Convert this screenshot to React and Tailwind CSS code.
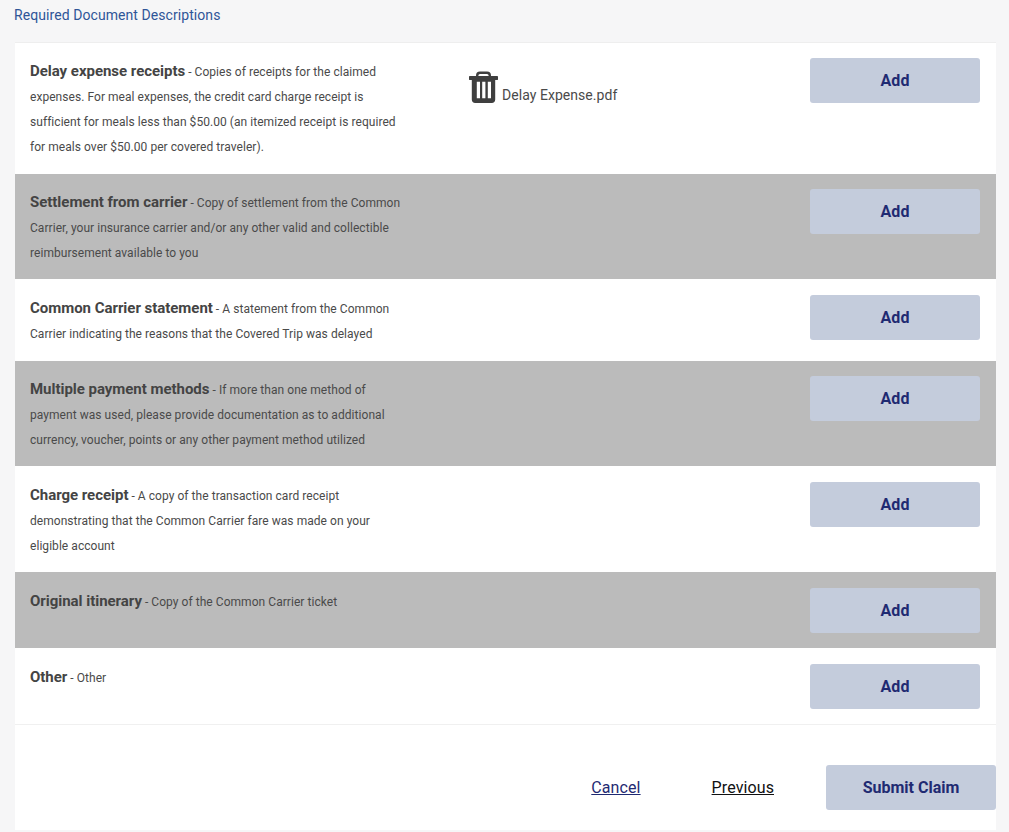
const rows = [
  { t: "Delay expense receipts", d: "Copies of receipts for the claimed expenses. For meal expenses, the credit card charge receipt is sufficient for meals less than $50.00 (an itemized receipt is required for meals over $50.00 per covered traveler).", file: true, c: "h-[131px] pt-[15px]" },
  { t: "Settlement from carrier", d: "Copy of settlement from the Common Carrier, your insurance carrier and/or any other valid and collectible reimbursement available to you", c: "h-[105px] pt-[15px] bg-[#bbbbbb]" },
  { t: "Common Carrier statement", d: "A statement from the Common Carrier indicating the reasons that the Covered Trip was delayed", c: "h-[82px] pt-[16px]" },
  { t: "Multiple payment methods", d: "If more than one method of payment was used, please provide documentation as to additional currency, voucher, points or any other payment method utilized", c: "h-[105px] pt-[15px] bg-[#bbbbbb]" },
  { t: "Charge receipt", d: "A copy of the transaction card receipt demonstrating that the Common Carrier fare was made on your eligible account", c: "h-[106px] pt-[16px]" },
  { t: "Original itinerary", d: "Copy of the Common Carrier ticket", c: "h-[76px] pt-[16px] bg-[#bbbbbb]" },
  { t: "Other", d: "Other", c: "h-[77px] pt-[16px] border-b border-[#f0f0f0]" },
];

function Trash() {
  return (
    <svg width="29" height="32" viewBox="0 0 29 32" className="shrink-0">
      <path fill="none" stroke="#3f3f3f" strokeWidth="2.4" d="M8.200 6V4.500C8.200 2.700 9.500 1.700 11 1.700h7c1.500 0 2.800 1 2.800 2.800V6" />
      <path fill="#3f3f3f" d="M1 5h27c.6 0 1 .4 1 1v2.500c0 .3-.2.5-.5.5h-2.300v19.500c0 2-1.400 3.500-3.300 3.500H6.100c-1.900 0-3.300-1.500-3.300-3.500V9H.5C.2 9 0 8.800 0 8.500V6c0-.6.400-1 1-1z" />
      <path fill="#fff" d="M7.800 10.800H11v16.500H7.800zM13.200 10.800h3.200v16.500h-3.200zM18.800 10.800H22v16.500h-3.200z" />
    </svg>
  );
}

export default function App() {
  return (
    <div className="min-h-[832px] bg-[#f6f6f7] font-['Roboto',sans-serif] overflow-hidden">
      <div className="pl-[14px] pt-[7px] h-[42px] text-[14px] leading-[17px] tracking-[0.07px] text-[#2f5597]">Required Document Descriptions</div>
      <div className="ml-[15px] w-[981px] bg-white">
        <div className="border-t border-[#eeeeee]">
          {rows.map((r) => (
            <div key={r.t} className={`box-border flex items-start justify-between pl-[15px] pr-[16px] ${r.c}`}>
              <div className="flex items-start">
                <div className="mt-[2px] w-[375px] text-[12px] leading-[25px] tracking-[0.05px] text-[#4a4a4a]">
                  <span className="text-[15px] leading-none font-bold tracking-[-0.03px] text-[#444444]">{r.t}</span> - {r.d}
                </div>
                {r.file && (
                  <div className="ml-[64px] mt-[13px] flex items-end">
                    <Trash />
                    <span className="ml-[4px] mb-[-1px] text-[14px] leading-[17px] tracking-[0.05px] text-[#4a4a4a]">Delay Expense.pdf</span>
                  </div>
                )}
              </div>
              <button className="w-[170px] h-[45px] rounded-[3px] bg-[#c4ccdc] text-[16px] font-bold tracking-[0.1px] text-[#1f2a72]">Add</button>
            </div>
          ))}
        </div>
        <div className="flex items-center justify-end pt-[40px] pb-[20px]">
          <a className="text-[16px] tracking-[0.1px] text-[#1f2a72] underline">Cancel</a>
          <a className="ml-[71px] text-[16px] tracking-[0.1px] text-[#111111] underline">Previous</a>
          <button className="ml-[52px] w-[170px] h-[45px] rounded-[3px] bg-[#c4ccdc] text-[16px] font-bold text-[#1f2a72]">Submit Claim</button>
        </div>
      </div>
    </div>
  );
}
